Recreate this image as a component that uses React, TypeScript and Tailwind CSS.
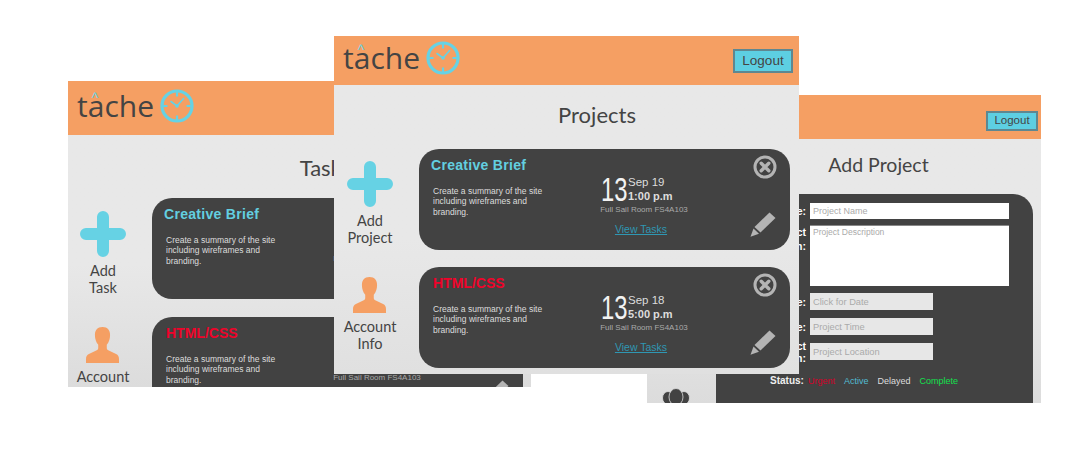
import type { ReactNode } from 'react'

const headingFont = "font-['Lato',sans-serif]"
const bodyFont = "font-['Liberation_Sans',Arial,sans-serif]"

function ClockIcon() {
  return (
    <svg width="34" height="34" viewBox="0 0 34 34" fill="none" stroke="#66d2e4" className="shrink-0">
      <circle cx="17" cy="17" r="15" strokeWidth="3.200" />
      <path d="M17 3v4.500M17 26.500v4.500M3 17h4.500M26.500 17h4.500" strokeWidth="2.200" />
      <path d="M11 12.500 17 17 23.500 9.500" strokeWidth="1.600" strokeLinecap="round" strokeLinejoin="round" />
      <circle cx="17" cy="17" r="1.800" fill="#66d2e4" stroke="none" />
    </svg>
  )
}

function Logo({ className }: { className: string }) {
  return (
    <div className={`flex items-center ${className}`}>
      <div className="relative text-[30px] leading-none text-[#444] font-['Open_Sans',sans-serif] font-normal">
        t<span className="relative">a<span className="absolute left-[4px] top-[6px] text-[14px] leading-none text-[#66d2e4] font-['Liberation_Sans',sans-serif]">^</span></span>che
      </div>
      <ClockIcon />
    </div>
  )
}

function PlusIcon() {
  return (
    <svg width="46" height="46" viewBox="0 0 46 46">
      <path d="M23 6v34M6 23h34" stroke="#66d2e4" strokeWidth="12" strokeLinecap="round" />
    </svg>
  )
}

function PersonIcon() {
  return (
    <svg width="33" height="36" viewBox="0 0 34 37" fill="#f59f63">
      <path d="M17 0c5.400 0 7.800 3.400 7.800 8.200 0 3.600-1.100 7.600-3.400 10v3.300c0 1.300 1 2.300 2.600 3L31 27.800c2 1 3 2.500 3 5V37H0v-4.200c0-2.500 1-4 3-5l7-3.300c1.600-.7 2.600-1.700 2.600-3v-3.300c-2.300-2.400-3.400-6.400-3.400-10C9.200 3.400 11.600 0 17 0Z" />
    </svg>
  )
}

function CloseIcon() {
  return (
    <svg width="24" height="24" viewBox="0 0 24 24" fill="none" stroke="#b4b4b4">
      <circle cx="12" cy="12" r="10" strokeWidth="3" />
      <path d="m8.200 8.200 7.600 7.600M15.800 8.200l-7.600 7.600" strokeWidth="3.400" strokeLinecap="round" />
    </svg>
  )
}

function PencilIcon() {
  return (
    <svg width="26" height="25" viewBox="0 0 26 25" fill="#b4b4b4" className="mr-[1px]">
      <path d="M19.500 0.500 25.500 6 10.500 20.500 4.500 15Z" />
      <path d="M3.500 16.500 9 21.800 0.500 24.800Z" />
    </svg>
  )
}

function SideItem({ icon, lines }: { icon: ReactNode; lines: string[] }) {
  return (
    <div className="flex flex-col items-center">
      {icon}
      <div className={`mt-[5px] text-center text-[14.500px] leading-[17px] text-[#444] ${headingFont}`}>
        {lines.map(line => (
          <div key={line}>{line}</div>
        ))}
      </div>
    </div>
  )
}

function Sidebar({ label, width }: { label: string; width: string }) {
  return (
    <div className={`flex shrink-0 flex-col items-center pt-[76px] ${width}`}>
      <SideItem icon={<PlusIcon />} lines={['Add', label]} />
      <div className="mt-[31px]">
        <SideItem icon={<PersonIcon />} lines={['Account', 'Info']} />
      </div>
    </div>
  )
}

interface CardProps {
  title: string
  titleClass: string
  date: string
  time: string
}

function Card({ title, titleClass, date, time }: CardProps) {
  return (
    <div className={`flex h-[101px] w-[371px] shrink-0 rounded-[20px] bg-[#424242] ${bodyFont}`}>
      <div className="w-[171px] shrink-0 pl-[14px] pt-[6px]">
        <div className={`text-[14px] font-bold leading-[20px] ${titleClass}`}>{title}</div>
        <p className="mt-[11px] w-[130px] text-[8.500px] leading-[10.300px] text-[#ddd]">
          Create a summary of the site including wireframes and branding.
        </p>
      </div>
      <div className="w-[106px] shrink-0 pt-[25px] text-center">
        <div className="flex items-center pl-[11px]">
          <span className="w-[26px] origin-left scale-x-[0.7] text-left text-[34px] leading-[30px] text-[#f2f2f2]">13</span>
          <div className="ml-[1px] text-left text-[11.500px] font-medium leading-[14px] text-[#ddd]">
            <div>{date}</div>
            <div className="text-[11px] font-bold">{time}</div>
          </div>
        </div>
        <div className="mt-[1px] whitespace-nowrap pl-[2px] text-[8px] leading-[10px] text-[#aaa]">Full Sail Room FS4A103</div>
        <div className="mt-[8px] pr-[4px] text-[10.500px] leading-[12px] text-[#2f97b3] underline">View Tasks</div>
      </div>
      <div className="flex flex-1 flex-col items-end justify-between pb-[13px] pr-[13px] pt-[6px]">
        <CloseIcon />
        <PencilIcon />
      </div>
    </div>
  )
}

function LogoutButton({ size }: { size: string }) {
  return (
    <button className={`border-2 border-[#5f8790] bg-[#5dcfe2] text-[#444] ${bodyFont} ${size}`}>Logout</button>
  )
}

function CardList({ spacing }: { spacing: string }) {
  return (
    <div className={`flex flex-col ${spacing}`}>
      <Card title="Creative Brief" titleClass="-ml-[2px] tracking-[0.3px] text-[#63cfe0]" date="Sep 19" time="1:00 p.m" />
      <Card title="HTML/CSS" titleClass="text-[#f0032a]" date="Sep 18" time="5:00 p.m" />
    </div>
  )
}

function FormRow({ label, children, className }: { label: ReactNode; children: ReactNode; className: string }) {
  return (
    <div className={`flex ${className}`}>
      <label className="w-[94px] shrink-0 pr-[4px] text-right text-[10.500px] font-bold leading-[12px] text-white">{label}</label>
      {children}
    </div>
  )
}

const smallInput =
  'h-[17px] w-[123px] shrink-0 bg-[#e7e7e7] px-[3px] text-[9.300px] outline-none placeholder:text-[#aaa]'

function ProjectForm() {
  return (
    <div className={`flex-1 rounded-tr-[20px] bg-[#424242] pt-[9px] ${bodyFont}`}>
      <FormRow label="Project Name:" className="items-center">
        <input placeholder="Project Name" className="h-[16px] w-[199px] bg-white px-[3px] text-[9px] outline-none placeholder:text-[#aaa]" />
      </FormRow>
      <FormRow label={<span className="block leading-[14px]">Project<br />Description:</span>} className="mt-[6px] items-start">
        <textarea placeholder="Project Description" className="h-[61px] w-[199px] resize-none border-t border-[#888] bg-white px-[3px] py-0 text-[8.500px] leading-[12px] outline-none placeholder:text-[#aaa]" />
      </FormRow>
      <FormRow label="Due Date:" className="mt-[7px] h-[17px] items-center">
        <input placeholder="Click for Date" className={smallInput} />
      </FormRow>
      <FormRow label="Due Time:" className="mt-[8px] h-[17px] items-center">
        <input placeholder="Project Time" className={smallInput} />
      </FormRow>
      <FormRow label={<>Project<br />Location:</>} className="mt-[8px] h-[17px] items-center">
        <input placeholder="Project Location" className={smallInput} />
      </FormRow>
      <div className="mt-[15px] flex items-baseline pl-[54px] text-[9px] leading-[12px]">
        <span className="text-[10px] font-bold text-[#eee]">Status:</span>
        <span className="ml-[4px] text-[#d4022a]">Urgent</span>
        <span className="ml-[9px] text-[#52bdd2]">Active</span>
        <span className="ml-[9px] text-[#ddd]">Delayed</span>
        <span className="ml-[9px] text-[#12e04d]">Complete</span>
      </div>
    </div>
  )
}

export default function App() {
  return (
    <div className="relative h-[455px] w-[1088px] overflow-hidden bg-white">
      {/* tasks window, back left */}
      <div className="absolute left-[68px] top-[81px] flex h-[306px] w-[463px] flex-col overflow-hidden bg-gradient-to-b from-[#e8e8e8] from-60% to-[#dcdcdc]">
        <div className="flex h-[54px] shrink-0 items-center bg-[#f59f63] pl-[9px]">
          <Logo className="mb-[4px] gap-[6px]" />
        </div>
        <div className="flex flex-1">
          <Sidebar label="Task" width="w-[84px] pr-[14px]" />
          <div className="flex-1">
            <h2 className={`pr-[32px] pt-[18px] text-center text-[22px] leading-[30px] text-[#444] ${headingFont}`}>Tasks</h2>
            <CardList spacing="mt-[15px] gap-[18px]" />
          </div>
        </div>
      </div>

      {/* add project window, back right */}
      <div className="absolute left-[647px] top-[95px] flex h-[308px] w-[394px] flex-col overflow-hidden bg-gradient-to-b from-[#e8e8e8] from-60% to-[#dcdcdc]">
        <div className="flex h-[44px] shrink-0 items-end justify-end bg-[#f59f63] pb-[8px] pr-[3px]">
          <LogoutButton size="h-[20px] w-[52px] text-[11.500px] leading-none" />
        </div>
        <div className="flex flex-1">
          <div className="w-[69px] shrink-0 pl-[15px] pt-[249px]">
            <svg width="28" height="18" viewBox="0 0 28 18" fill="#424242" stroke="#dedede" strokeWidth="0.800">
              <ellipse cx="6" cy="10" rx="5.500" ry="6.500" />
              <ellipse cx="22" cy="10" rx="5.500" ry="6.500" />
              <ellipse cx="14" cy="9" rx="7" ry="8.500" />
            </svg>
          </div>
          <div className="flex flex-1 flex-col pr-[8px]">
            <h2 className={`pl-[8px] pt-[12px] text-center text-[19.500px] leading-[28px] text-[#444] ${headingFont}`}>Add Project</h2>
            <div className="mt-[15px] flex flex-1">
              <ProjectForm />
            </div>
          </div>
        </div>
      </div>

      {/* projects window, front */}
      <div className="absolute left-[334px] top-[36px] flex h-[338px] w-[465px] flex-col overflow-hidden bg-gradient-to-b from-[#e8e8e8] from-60% to-[#e0e0e0]">
        <div className="flex h-[49px] shrink-0 items-center justify-between bg-[#f59f63] pl-[9px] pr-[6px]">
          <Logo className="mb-[6px] gap-[6px]" />
          <LogoutButton size="h-[24px] w-[60px] text-[13.500px] leading-none" />
        </div>
        <div className="flex flex-1">
          <Sidebar label="Project" width="w-[85px] pr-[13px]" />
          <div className="flex-1">
            <h2 className={`pr-[24px] pt-[15px] text-center text-[22px] leading-[30px] text-[#444] ${headingFont}`}>Projects</h2>
            <CardList spacing="mt-[19px] gap-[17px]" />
          </div>
        </div>
      </div>
    </div>
  )
}
